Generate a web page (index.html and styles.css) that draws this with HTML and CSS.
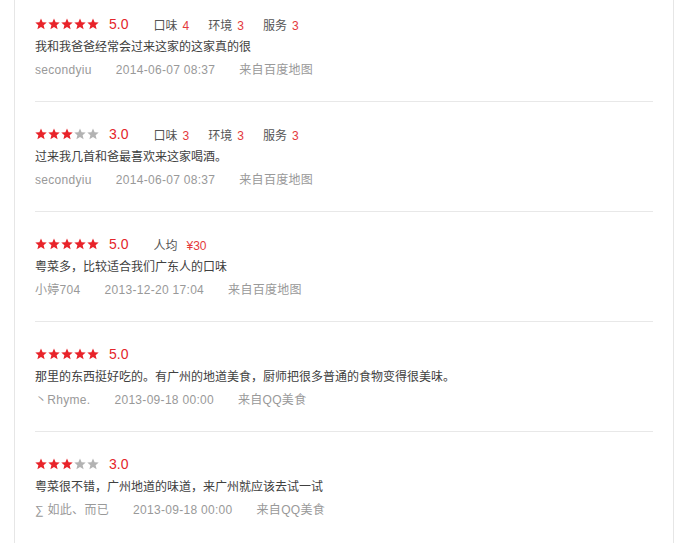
FILE: index.html
```html
<!DOCTYPE html>
<html lang="zh-CN">
<head>
    <meta charset="UTF-8">
    <title>网友点评</title>
    <link rel="stylesheet" href="styles.css">
</head>
<body>
<svg width="0" height="0" class="defs">
    <symbol id="star" viewBox="0 0 12 12">
        <polygon points="6,0.4 7.6,4.2 11.7,4.5 8.6,7.2 9.6,11.3 6,9.1 2.4,11.3 3.4,7.2 0.3,4.5 4.4,4.2"/>
    </symbol>
</svg>

<div class="comments">
    <div class="review">
        <div class="rating">
            <div class="stars">
                <svg class="star on"><use href="#star"/></svg>
                <svg class="star on"><use href="#star"/></svg>
                <svg class="star on"><use href="#star"/></svg>
                <svg class="star on"><use href="#star"/></svg>
                <svg class="star on"><use href="#star"/></svg>
            </div>
            <span class="score">5.0</span>
            <div class="tags">
                <span class="tag">口味<em>4</em></span>
                <span class="tag">环境<em>3</em></span>
                <span class="tag">服务<em>3</em></span>
            </div>
        </div>
        <p class="content">我和我爸爸经常会过来这家的这家真的很</p>
        <div class="meta">
            <span>secondyiu</span>
            <span>2014-06-07 08:37</span>
            <span>来自百度地图</span>
        </div>
    </div>

    <div class="review">
        <div class="rating">
            <div class="stars">
                <svg class="star on"><use href="#star"/></svg>
                <svg class="star on"><use href="#star"/></svg>
                <svg class="star on"><use href="#star"/></svg>
                <svg class="star"><use href="#star"/></svg>
                <svg class="star"><use href="#star"/></svg>
            </div>
            <span class="score">3.0</span>
            <div class="tags">
                <span class="tag">口味<em>3</em></span>
                <span class="tag">环境<em>3</em></span>
                <span class="tag">服务<em>3</em></span>
            </div>
        </div>
        <p class="content">过来我几首和爸最喜欢来这家喝酒。</p>
        <div class="meta">
            <span>secondyiu</span>
            <span>2014-06-07 08:37</span>
            <span>来自百度地图</span>
        </div>
    </div>

    <div class="review">
        <div class="rating">
            <div class="stars">
                <svg class="star on"><use href="#star"/></svg>
                <svg class="star on"><use href="#star"/></svg>
                <svg class="star on"><use href="#star"/></svg>
                <svg class="star on"><use href="#star"/></svg>
                <svg class="star on"><use href="#star"/></svg>
            </div>
            <span class="score">5.0</span>
            <div class="tags">
                <span class="tag">人均<em class="price">¥30</em></span>
            </div>
        </div>
        <p class="content">粤菜多，比较适合我们广东人的口味</p>
        <div class="meta">
            <span>小婷704</span>
            <span>2013-12-20 17:04</span>
            <span>来自百度地图</span>
        </div>
    </div>

    <div class="review">
        <div class="rating">
            <div class="stars">
                <svg class="star on"><use href="#star"/></svg>
                <svg class="star on"><use href="#star"/></svg>
                <svg class="star on"><use href="#star"/></svg>
                <svg class="star on"><use href="#star"/></svg>
                <svg class="star on"><use href="#star"/></svg>
            </div>
            <span class="score">5.0</span>
        </div>
        <p class="content">那里的东西挺好吃的。有广州的地道美食，厨师把很多普通的食物变得很美味。</p>
        <div class="meta">
            <span>丶Rhyme.</span>
            <span>2013-09-18 00:00</span>
            <span>来自QQ美食</span>
        </div>
    </div>

    <div class="review">
        <div class="rating">
            <div class="stars">
                <svg class="star on"><use href="#star"/></svg>
                <svg class="star on"><use href="#star"/></svg>
                <svg class="star on"><use href="#star"/></svg>
                <svg class="star"><use href="#star"/></svg>
                <svg class="star"><use href="#star"/></svg>
            </div>
            <span class="score">3.0</span>
        </div>
        <p class="content">粤菜很不错，广州地道的味道，来广州就应该去试一试</p>
        <div class="meta">
            <span>∑ 如此、而已</span>
            <span>2013-09-18 00:00</span>
            <span>来自QQ美食</span>
        </div>
    </div>
</div>
</body>
</html>
```

FILE: styles.css
```css
* {
    margin: 0;
    padding: 0;
    box-sizing: border-box;
}

body {
    background: #fff;
    font-family: "Liberation Sans", "Noto Sans CJK SC", sans-serif;
    font-size: 12px;
    color: #333;
}

.defs {
    position: absolute;
}

.comments {
    margin-left: 14px;
    width: 660px;
    min-height: 543px;
    padding: 0 20px;
    border-left: 1px solid #e6e6e6;
    border-right: 1px solid #e6e6e6;
}

.review {
    padding: 22px 0 21px;
    border-bottom: 1px solid #e8e8e8;
}

.review:first-child {
    padding-top: 14px;
}

.review:last-child {
    border-bottom: none;
}

.rating {
    display: flex;
    align-items: center;
    height: 20px;
}

.stars {
    display: flex;
    gap: 1px;
}

.star {
    width: 12px;
    height: 12px;
    fill: #b3b3b3;
}

.star.on {
    fill: #e8232a;
}

.score {
    margin-left: 10px;
    font-size: 14px;
    color: #e4262c;
}

.tags {
    display: flex;
    gap: 19px;
    margin-left: 25px;
}

.tag {
    color: #555;
}

.tag em {
    font-style: normal;
    color: #e4393c;
    margin-left: 5px;
}

.tag em.price {
    margin-left: 9px;
}

.content {
    margin-top: 3px;
    line-height: 20px;
    color: #404040;
}

.meta {
    display: flex;
    gap: 24px;
    margin-top: 3px;
    line-height: 20px;
    color: #999;
    letter-spacing: 0.3px;
}
```
